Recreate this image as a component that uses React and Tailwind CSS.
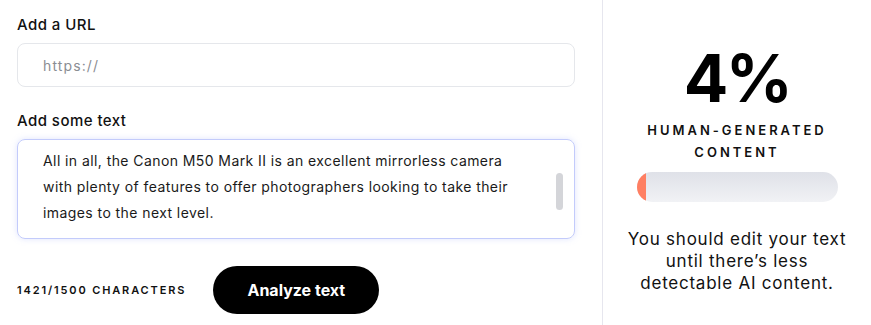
import React from 'react';

const FONT = "font-['Inter','Noto_Sans',sans-serif]";

export default function App() {
  return (
    <div className={`w-[871px] h-[325px] bg-white flex text-black ${FONT}`}>
      {/* Left: inputs */}
      <div className="w-[602px] pl-[17px] pr-[27px] pt-[14px] flex flex-col">
        <label className="text-[15px] font-medium leading-[22px] tracking-[0.03em] text-[#111]">Add a URL</label>
        <div className="mt-[7px] h-[44px] rounded-[8px] border border-[#e5e7eb] flex items-center pl-[25px]">
          <span className="text-[14px] tracking-[0.08em] text-[#8a8d93]">https://</span>
        </div>

        <label className="mt-[23px] text-[15px] font-medium leading-[22px] tracking-[0.03em] text-[#111]">Add some text</label>
        <div className="mt-[7px] h-[100px] rounded-[8px] border border-[#c3cbfb] shadow-[0_0_6px_rgba(165,180,252,0.35)] flex pl-[25px] pr-[11px]">
          <p className="flex-1 pt-[8px] text-[14px] leading-[26px] tracking-[0.03em] text-[#1a1a1a]">
            All in all, the Canon M50 Mark II is an excellent mirrorless camera<br />
            with plenty of features to offer photographers looking to take their<br />
            images to the next level.
          </p>
          <div className="mt-[33px] w-[7px] h-[37px] rounded-full bg-[#d4d5d9]" />
        </div>

        <div className="mt-[27px] flex items-center">
          <span className="text-[11px] font-semibold tracking-[0.17em] text-[#111]">1421/1500 CHARACTERS</span>
          <button className="ml-[27px] w-[166px] h-[48px] rounded-full bg-black text-white text-[16px] font-bold">
            Analyze text
          </button>
        </div>
      </div>

      {/* Right: result */}
      <div className="flex-1 border-l border-[#e6e6ee] flex flex-col items-center pt-[42px]">
        <div className="text-[66px] font-bold leading-[72px] tracking-[-0.04em]">4%</div>
        <div className="mt-[5px] text-[13px] font-semibold tracking-[0.23em] leading-[22px] text-center text-[#111]">
          HUMAN-GENERATED<br />CONTENT
        </div>
        <div className="mt-[9px] w-[201px] h-[30px] rounded-full bg-gradient-to-b from-[#dfe1e8] to-[#f1f2f5] overflow-hidden flex">
          <div className="w-[9px] h-full bg-[#ff7f62] rounded-l-full" />
        </div>
        <p className="mt-[26px] text-[17px] leading-[22px] tracking-[0.045em] text-center text-[#111]">
          You should edit your text<br />until there’s less<br />detectable AI content.
        </p>
      </div>
    </div>
  );
}
